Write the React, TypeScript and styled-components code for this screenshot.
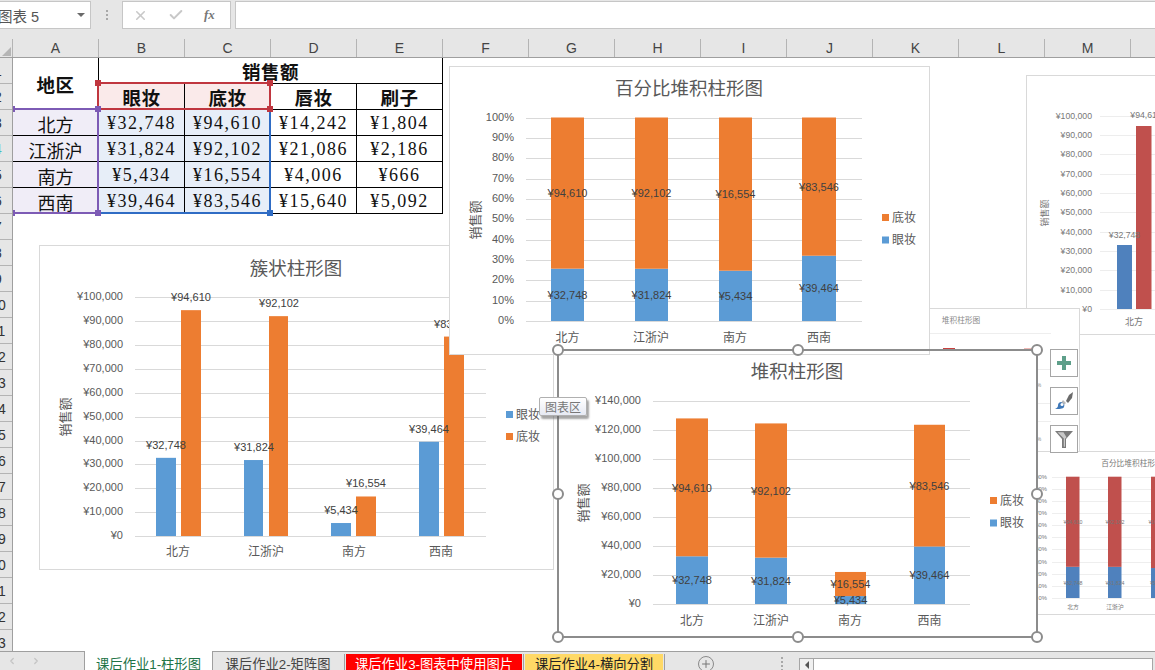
import React from "react";
import styled, { createGlobalStyle } from "styled-components";
import { X, Check, Plus, ChevronLeft, ChevronRight } from "lucide-react";

const FONT = `"Liberation Sans", "Noto Sans CJK SC", sans-serif`;
const BLUE = "#5b9bd5";
const ORANGE = "#ed7d31";
const OLD_BLUE = "#4f81bd";
const OLD_RED = "#c0504d";

const Global = createGlobalStyle`
  html, body { margin: 0; padding: 0; background: #fff; overflow: hidden; }
  * { box-sizing: border-box; }
`;

const Page = styled.div`
  position: relative;
  width: 1155px;
  height: 670px;
  overflow: hidden;
  display: flex;
  flex-direction: column;
  font-family: ${FONT};
  background: #fff;
`;

/* ---------- formula bar ---------- */
const TopBar = styled.div`
  height: 39px;
  flex: none;
  background: #e6e6e6;
  padding-top: 1px;
  display: flex;
  align-items: flex-start;
`;
const NameBox = styled.div`
  width: 91px;
  height: 28px;
  background: #fff;
  border: 1px solid #c6c6c6;
  border-left: none;
  display: flex;
  align-items: center;
  justify-content: space-between;
  padding-right: 5px;
  overflow: hidden;
  font-size: 14.5px;
  color: #555;
`;
const NameText = styled.span`
  margin-left: -2px;
  white-space: nowrap;
`;
const DownArrow = styled.span`
  width: 0;
  height: 0;
  border-left: 4px solid transparent;
  border-right: 4px solid transparent;
  border-top: 4px solid #6a6a6a;
`;
const Grip = styled.div`
  width: 31px;
  height: 28px;
  display: flex;
  flex-direction: column;
  align-items: center;
  justify-content: center;
  gap: 2px;
`;
const GripDot = styled.span`
  width: 2px;
  height: 2px;
  background: #a8a8a8;
`;
const FormulaButtons = styled.div`
  width: 109px;
  height: 28px;
  background: #fff;
  border: 1px solid #c6c6c6;
  display: flex;
  align-items: center;
  gap: 20px;
  padding-left: 10px;
  color: #c8c8c8;
`;
const Fx = styled.i`
  font-family: "Liberation Serif", serif;
  font-size: 13px;
  font-weight: bold;
  color: #777;
`;
const FormulaInput = styled.div`
  flex: 1;
  height: 28px;
  margin-left: 4px;
  background: #fff;
  border: 1px solid #c6c6c6;
  border-right: none;
`;

/* ---------- column headers ---------- */
const ColumnBar = styled.div`
  height: 19px;
  flex: none;
  display: flex;
  background: #e6e6e6;
  border-bottom: 1px solid #9f9f9f;
`;
const Corner = styled.div`
  width: 13px;
  flex: none;
  border-right: 1px solid #b4b4b4;
  position: relative;
  overflow: hidden;
`;
const CornerTriangle = styled.span`
  position: absolute;
  right: 1px;
  bottom: 1px;
  width: 0;
  height: 0;
  border-left: 9px solid transparent;
  border-bottom: 9px solid #b5b5b5;
`;
const ColumnCell = styled.div`
  width: 86px;
  flex: none;
  border-right: 1px solid #b4b4b4;
  display: flex;
  align-items: center;
  justify-content: center;
  font-size: 14px;
  color: #444;
`;

/* ---------- sheet ---------- */
const SheetBody = styled.div`
  flex: 1;
  min-height: 0;
  display: flex;
`;
const RowHeader = styled.div`
  width: 13px;
  flex: none;
  background: #e6e6e6;
  border-right: 1px solid #9f9f9f;
  overflow: hidden;
`;
const RowCell = styled.div`
  height: 26px;
  border-bottom: 1px solid #b4b4b4;
  display: flex;
  align-items: center;
  overflow: hidden;
`;
const RowNumber = styled.span<{ $tint?: boolean }>`
  flex: none;
  width: 56px;
  margin-left: -30px;
  text-align: center;
  font-size: 14px;
  color: ${(p) => (p.$tint ? "#45bcbc" : "#333")};
`;
const TableWrap = styled.div`
  position: relative;
  width: 434px;
  height: 160px;
  overflow: hidden;
  display: grid;
  grid-template-columns: repeat(5, 86px);
  grid-auto-rows: 26px;
  align-content: start;
`;
const Cell = styled.div<{ $bg?: string; $bold?: boolean; $num?: boolean; $col?: string; $row?: string }>`
  grid-column: ${(p) => p.$col ?? "auto"};
  grid-row: ${(p) => p.$row ?? "auto"};
  background: ${(p) => p.$bg ?? "#fff"};
  border-right: 1px solid #000;
  border-bottom: 1px solid #000;
  padding-top: ${(p) => (p.$bold ? "0" : "2px")};
  display: flex;
  align-items: center;
  justify-content: center;
  color: #111;
  font-family: "Liberation Serif", "Noto Sans CJK SC", serif;
  font-size: ${(p) => (p.$bold ? "18.5px" : "18px")};
  font-weight: ${(p) => (p.$bold ? 700 : 400)};
  letter-spacing: ${(p) => (p.$bold ? "0.5px" : p.$num ? "1.5px" : "0")};
  white-space: nowrap;
`;
const RangeBox = styled.div<{ $x: number; $y: number; $w: number; $h: number; $c: string; $open?: boolean }>`
  position: absolute;
  left: ${(p) => p.$x}px;
  top: ${(p) => p.$y}px;
  width: ${(p) => p.$w}px;
  height: ${(p) => p.$h}px;
  border: 2px solid ${(p) => p.$c};
  ${(p) => (p.$open ? "border-left: none;" : "")}
`;
const RangeHandle = styled.span<{ $h: number; $v: number; $c: string }>`
  position: absolute;
  left: calc(${(p) => p.$h}% + ${(p) => (p.$h / 100) * 2 - 1}px);
  top: calc(${(p) => p.$v}% + ${(p) => (p.$v / 100) * 2 - 1}px);
  width: 6px;
  height: 6px;
  background: ${(p) => p.$c};
  transform: translate(-50%, -50%);
`;

/* ---------- charts on the free canvas ---------- */
const ChartLayer = styled.div`
  position: absolute;
  left: 0;
  top: 0;
  width: 1155px;
  height: 651px;
  overflow: hidden;
  pointer-events: none;
`;
const ChartFrame = styled.div<{ $x: number; $y: number; $w: number; $h: number }>`
  position: absolute;
  left: ${(p) => p.$x}px;
  top: ${(p) => p.$y}px;
  width: ${(p) => p.$w}px;
  height: ${(p) => p.$h}px;
  background: #fff;
  border: 1px solid #d9d9d9;
`;
const ChartSvg = styled.svg`
  position: absolute;
  left: -1px;
  top: -1px;
  display: block;
  font-family: ${FONT};
`;
const SelectionBox = styled.div`
  position: absolute;
  left: 557px;
  top: 349px;
  width: 481px;
  height: 289px;
  border: 2px solid #8c8c8c;
`;
const Handle = styled.span<{ $h: number; $v: number }>`
  position: absolute;
  left: calc(${(p) => p.$h}% + ${(p) => (p.$h / 100) * 2 - 1}px);
  top: calc(${(p) => p.$v}% + ${(p) => (p.$v / 100) * 2 - 1}px);
  width: 12px;
  height: 12px;
  border-radius: 50%;
  background: #fff;
  border: 2px solid #8c8c8c;
  transform: translate(-50%, -50%);
`;
const SideButtons = styled.div`
  position: absolute;
  left: 1050px;
  top: 349px;
  display: flex;
  flex-direction: column;
  gap: 10px;
`;
const SideButton = styled.div`
  width: 28px;
  height: 28px;
  background: #fff;
  border: 1px solid #a6a6a6;
  display: flex;
  align-items: center;
  justify-content: center;
`;
const Tooltip = styled.div`
  position: absolute;
  left: 539px;
  top: 397px;
  width: 48px;
  height: 19px;
  border: 1px solid #b0b0b0;
  border-radius: 2px;
  background: linear-gradient(180deg, #fff 0%, #e6e9f3 100%);
  box-shadow: 2px 3px 2px rgba(90, 90, 90, 0.55);
  font-size: 12px;
  color: #777;
  display: flex;
  align-items: center;
  justify-content: center;
`;

/* ---------- sheet tabs ---------- */
const TabBar = styled.div`
  height: 19px;
  flex: none;
  background: #e6e6e6;
  border-top: 1px solid #9f9f9f;
  display: flex;
  position: relative;
  z-index: 2;
`;
const TabNav = styled.div`
  width: 84px;
  flex: none;
  display: flex;
  align-items: center;
  gap: 14px;
  padding-left: 7px;
  color: #c4c4c4;
`;
const Tab = styled.div<{ $w: number; $bg?: string; $fg?: string; $active?: boolean; $gap?: number }>`
  width: ${(p) => p.$w}px;
  flex: none;
  margin-left: ${(p) => p.$gap ?? 0}px;
  margin-top: ${(p) => (p.$active ? "-1px" : p.$bg ? "2px" : "0")};
  margin-bottom: -2px;
  background: ${(p) => (p.$active ? "#fff" : p.$bg ?? "transparent")};
  color: ${(p) => (p.$active ? "#217346" : p.$fg ?? "#444")};
  border-left: ${(p) => (p.$active ? "1px solid #9f9f9f" : "none")};
  border-right: ${(p) => (p.$active ? "1px solid #9f9f9f" : "none")};
  display: flex;
  align-items: flex-end;
  justify-content: center;
  font-size: 13.3px;
  line-height: 15px;
  white-space: nowrap;
  overflow: hidden;
`;
const TabSeparator = styled.span`
  width: 1px;
  flex: none;
  margin: 2px 0 0 1px;
  background: #9f9f9f;
`;
const AddSheet = styled.div`
  width: 16px;
  height: 16px;
  flex: none;
  margin: 4px 0 0 33px;
  border: 1.5px solid #8a8a8a;
  border-radius: 50%;
  display: flex;
  align-items: center;
  justify-content: center;
  color: #777;
`;
const BarGrip = styled.div`
  width: 2px;
  flex: none;
  margin: 5px 0 0 67px;
  height: 13px;
  background: repeating-linear-gradient(180deg, #a8a8a8 0 2px, transparent 2px 4px);
`;
const ScrollTrack = styled.div`
  width: 354px;
  height: 13px;
  flex: none;
  margin: 6px 0 0 16px;
  background: #fff;
  border: 1px solid #a6a6a6;
  border-bottom: none;
  display: flex;
`;
const ScrollButton = styled.div`
  width: 14px;
  flex: none;
  border-right: 1px solid #a6a6a6;
  background: #f0f0f0;
  display: flex;
  align-items: center;
  justify-content: center;
`;
const ScrollArrow = styled.span`
  width: 0;
  height: 0;
  border-top: 4px solid transparent;
  border-bottom: 4px solid transparent;
  border-right: 4px solid #555;
`;

/* ---------- chart data ---------- */
type Rect = { x: number; w: number; y0: number; y1: number; c: string };
type Label = { x: number; y: number; t: string };
type Spec = {
  x: number; y: number; w: number; h: number;
  title?: { x: number; y: number; t: string; s: number };
  axisTitle?: { x: number; y: number; s: number };
  ticks?: { x: number; s: number; labels: string[]; dy: number };
  plot: { x0: number; x1: number; ys: number[]; c: string };
  cats?: { xs: number[]; y: number; s: number; labels?: string[] };
  bars: Rect[];
  labels: Label[];
  labelSize: number;
  legend?: { x: number; items: { y: number; t: string; c: string }[] };
  tone?: string;
};

const CATS = ["北方", "江浙沪", "南方", "西南"];
const EYE = [32748, 31824, 5434, 39464];
const BASE = [94610, 92102, 16554, 83546];
const money = (n: number) => "¥" + n.toLocaleString("en-US");
const range = (top: number, bottom: number, n: number) =>
  Array.from({ length: n + 1 }, (_, i) => top + ((bottom - top) * i) / n);
const moneyTicks = (max: number, step: number) => {
  const out: string[] = [];
  for (let v = max; v >= 0; v -= step) out.push(money(v));
  return out;
};
const pctTicks = Array.from({ length: 11 }, (_, i) => `${100 - i * 10}%`);

const clusterSpec: Spec = (() => {
  const bottom = 536;
  const k = 238.7 / 100000;
  const bx = [[156, 20], [244, 19], [331, 20], [419, 20]];
  const ox = [[181, 20], [269, 19], [356, 20], [444, 20]];
  const bars: Rect[] = [];
  const labels: Label[] = [];
  CATS.forEach((_, i) => {
    const ty = bottom - EYE[i] * k;
    const oy = bottom - BASE[i] * k;
    bars.push({ x: bx[i][0], w: bx[i][1], y0: ty, y1: bottom, c: BLUE });
    bars.push({ x: ox[i][0], w: ox[i][1], y0: oy, y1: bottom, c: ORANGE });
    labels.push({ x: bx[i][0] + 10, y: ty - 13, t: money(EYE[i]) });
    labels.push({ x: ox[i][0] + 10, y: oy - 13, t: money(BASE[i]) });
  });
  return {
    x: 39, y: 245, w: 515, h: 325,
    title: { x: 296, y: 268, t: "簇状柱形图", s: 18.5 },
    axisTitle: { x: 65, y: 417, s: 13 },
    ticks: { x: 123, s: 11, labels: moneyTicks(100000, 10000), dy: -1 },
    plot: { x0: 135, x1: 486, ys: range(297.3, 536, 10), c: "#d9d9d9" },
    cats: { xs: [178, 266, 354, 441], y: 552, s: 12 },
    bars, labels, labelSize: 11,
    legend: { x: 506, items: [{ y: 414.5, t: "眼妆", c: BLUE }, { y: 436.5, t: "底妆", c: ORANGE }] },
  };
})();

const percentSpec: Spec = (() => {
  const top = 117.5, bottom = 321;
  const bx = [[551, 33], [635, 33], [719, 33], [802, 34]];
  const bars: Rect[] = [];
  const labels: Label[] = [];
  const ly = [[295, 193], [295, 193], [296, 194], [288, 187]];
  CATS.forEach((_, i) => {
    const share = EYE[i] / (EYE[i] + BASE[i]);
    const m = bottom - share * (bottom - top);
    bars.push({ x: bx[i][0], w: bx[i][1], y0: m, y1: bottom, c: BLUE });
    bars.push({ x: bx[i][0], w: bx[i][1], y0: top, y1: m, c: ORANGE });
    const cx = bx[i][0] + bx[i][1] / 2;
    labels.push({ x: cx, y: ly[i][0], t: money(EYE[i]) });
    labels.push({ x: cx, y: ly[i][1], t: money(BASE[i]) });
  });
  return {
    x: 449, y: 66, w: 481, h: 289,
    title: { x: 689, y: 88, t: "百分比堆积柱形图", s: 18.5 },
    axisTitle: { x: 475, y: 220, s: 13 },
    ticks: { x: 514, s: 11, labels: pctTicks, dy: -1 },
    plot: { x0: 526, x1: 862, ys: range(top, bottom, 10), c: "#d9d9d9" },
    cats: { xs: [567.5, 651, 735, 819], y: 337.5, s: 12 },
    bars, labels, labelSize: 11,
    legend: { x: 882, items: [{ y: 217.5, t: "底妆", c: ORANGE }, { y: 240, t: "眼妆", c: BLUE }] },
  };
})();

const stackedSpec: Spec = (() => {
  const bottom = 604;
  const k = 204 / 140000;
  const bx = [[676, 32], [755, 32], [835, 31], [914, 31]];
  const ly = [[580, 488], [581, 491], [600, 584], [575, 486]];
  const bars: Rect[] = [];
  const labels: Label[] = [];
  CATS.forEach((_, i) => {
    const m = bottom - EYE[i] * k;
    const t = m - BASE[i] * k;
    bars.push({ x: bx[i][0], w: bx[i][1], y0: m, y1: bottom, c: BLUE });
    bars.push({ x: bx[i][0], w: bx[i][1], y0: t, y1: m, c: ORANGE });
    const cx = bx[i][0] + bx[i][1] / 2;
    labels.push({ x: cx, y: ly[i][0], t: money(EYE[i]) });
    labels.push({ x: cx, y: ly[i][1], t: money(BASE[i]) });
  });
  return {
    x: 558, y: 350, w: 480, h: 288,
    title: { x: 797, y: 371, t: "堆积柱形图", s: 18.5 },
    axisTitle: { x: 583, y: 503, s: 13 },
    ticks: { x: 641, s: 11, labels: moneyTicks(140000, 20000), dy: -1 },
    plot: { x0: 653, x1: 970, ys: range(400.5, 604, 7), c: "#d9d9d9" },
    cats: { xs: [692, 771, 850, 929.5], y: 620.5, s: 12 },
    bars, labels, labelSize: 11,
    legend: { x: 990, items: [{ y: 500.5, t: "底妆", c: ORANGE }, { y: 523, t: "眼妆", c: BLUE }] },
  };
})();

const smallClusterSpec: Spec = {
  x: 1026, y: 75, w: 200, h: 260,
  axisTitle: { x: 1045, y: 213, s: 9 },
  ticks: { x: 1092, s: 8.7, labels: moneyTicks(100000, 10000), dy: 0 },
  plot: { x0: 1100, x1: 1155, ys: range(115.5, 309, 10), c: "#ededed" },
  cats: { xs: [1134], y: 322, s: 9, labels: ["北方"] },
  bars: [
    { x: 1117, w: 15, y0: 245, y1: 309, c: OLD_BLUE },
    { x: 1136, w: 15.5, y0: 126, y1: 309, c: OLD_RED },
  ],
  labels: [
    { x: 1124.5, y: 235, t: "¥32,748" },
    { x: 1146, y: 115, t: "¥94,610" },
  ],
  labelSize: 8.7,
  tone: "#777",
};

const smallStackedSpec: Spec = {
  x: 700, y: 308, w: 380, h: 144,
  title: { x: 961, y: 320, t: "堆积柱形图", s: 7.7 },
  plot: { x0: 780, x1: 1051, ys: [333, 369, 403, 421], c: "#eeeeee" },
  bars: [
    { x: 943, w: 12, y0: 348, y1: 440, c: "#c9403f" },
    { x: 1024, w: 9, y0: 348, y1: 440, c: "#f0b9b6" },
  ],
  labels: [
    { x: 1039, y: 385, t: "%" },
    { x: 1039, y: 439, t: "%" },
  ],
  labelSize: 5,
  tone: "#888",
};

const smallPercentSpec: Spec = (() => {
  const top = 476.7, bottom = 598;
  const bx = [1066, 1108, 1151];
  const bars: Rect[] = [];
  const labels: Label[] = [];
  bx.forEach((x, i) => {
    const share = EYE[i] / (EYE[i] + BASE[i]);
    const m = bottom - share * (bottom - top);
    bars.push({ x, w: 13.5, y0: m, y1: bottom, c: OLD_BLUE });
    bars.push({ x, w: 13.5, y0: top, y1: m, c: OLD_RED });
    labels.push({ x: x + 7, y: 583, t: money(EYE[i]) });
    labels.push({ x: x + 7, y: 522, t: money(BASE[i]) });
  });
  return {
    x: 800, y: 451, w: 420, h: 164,
    title: { x: 1132, y: 463, t: "百分比堆积柱形图", s: 7.7 },
    ticks: { x: 1047, s: 5.8, labels: pctTicks, dy: 0 },
    plot: { x0: 1052, x1: 1155, ys: range(top, bottom, 10), c: "#eeeeee" },
    cats: { xs: [1073, 1115], y: 606.5, s: 5.8, labels: ["北方", "江浙沪"] },
    bars, labels, labelSize: 5.3,
    tone: "#777",
  };
})();

const Chart: React.FC<{ spec: Spec }> = ({ spec }) => {
  const tone = spec.tone ?? "#595959";
  return (
    <ChartFrame $x={spec.x} $y={spec.y} $w={spec.w} $h={spec.h}>
      <ChartSvg width={spec.w} height={spec.h} viewBox={`${spec.x} ${spec.y} ${spec.w} ${spec.h}`}>
        {spec.plot.ys.map((y) => (
          <line
            key={y}
            x1={spec.plot.x0}
            x2={spec.plot.x1}
            y1={Math.round(y) + 0.5}
            y2={Math.round(y) + 0.5}
            stroke={spec.plot.c}
            shapeRendering="crispEdges"
          />
        ))}
        {spec.bars.map((b, i) => (
          <rect key={i} x={b.x} width={b.w} y={b.y0} height={b.y1 - b.y0} fill={b.c} />
        ))}
        {spec.title && (
          <text x={spec.title.x} y={spec.title.y} fontSize={spec.title.s} fill={tone} textAnchor="middle" dominantBaseline="central">
            {spec.title.t}
          </text>
        )}
        {spec.axisTitle && (
          <text
            x={spec.axisTitle.x}
            y={spec.axisTitle.y}
            fontSize={spec.axisTitle.s}
            fill={tone}
            textAnchor="middle"
            dominantBaseline="central"
            transform={`rotate(-90 ${spec.axisTitle.x} ${spec.axisTitle.y})`}
          >
            销售额
          </text>
        )}
        {spec.ticks &&
          spec.ticks.labels.map((t, i) => (
            <text
              key={t}
              x={spec.ticks!.x}
              y={spec.plot.ys[i] + spec.ticks!.dy}
              fontSize={spec.ticks!.s}
              fill={tone}
              textAnchor="end"
              dominantBaseline="central"
            >
              {t}
            </text>
          ))}
        {spec.cats &&
          spec.cats.xs.map((x, i) => (
            <text key={x} x={x} y={spec.cats!.y} fontSize={spec.cats!.s} fill={tone} textAnchor="middle" dominantBaseline="central">
              {(spec.cats!.labels ?? CATS)[i]}
            </text>
          ))}
        {spec.labels.map((l) => (
          <text key={l.t + l.y} x={l.x} y={l.y} fontSize={spec.labelSize} fill={spec.tone ?? "#404040"} textAnchor="middle" dominantBaseline="central">
            {l.t}
          </text>
        ))}
        {spec.legend &&
          spec.legend.items.map((it) => (
            <g key={it.t}>
              <rect x={spec.legend!.x} y={it.y - 3.5} width={7} height={7} fill={it.c} />
              <text x={spec.legend!.x + 10} y={it.y} fontSize={12} fill={tone} dominantBaseline="central">
                {it.t}
              </text>
            </g>
          ))}
      </ChartSvg>
    </ChartFrame>
  );
};

const COLUMNS = "ABCDEFGHIJKLMN".split("");
const ROWS = Array.from({ length: 23 }, (_, i) => i + 1);
const PURPLE = "#f0edf7";
const PALE_BLUE = "#e7eef8";
const PINK = "#faeaea";
const TABLE: string[][] = [
  ["北方", "¥32,748", "¥94,610", "¥14,242", "¥1,804"],
  ["江浙沪", "¥31,824", "¥92,102", "¥21,086", "¥2,186"],
  ["南方", "¥5,434", "¥16,554", "¥4,006", "¥666"],
  ["西南", "¥39,464", "¥83,546", "¥15,640", "¥5,092"],
];
const HANDLES: [number, number][] = [
  [0, 0], [50, 0], [100, 0], [0, 50], [100, 50], [0, 100], [50, 100], [100, 100],
];

export default function App() {
  return (
    <Page>
      <Global />
      <TopBar>
        <NameBox>
          <NameText>图表 5</NameText>
          <DownArrow />
        </NameBox>
        <Grip>
          <GripDot />
          <GripDot />
          <GripDot />
        </Grip>
        <FormulaButtons>
          <X size={15} strokeWidth={2.5} />
          <Check size={16} strokeWidth={3} />
          <Fx>fx</Fx>
        </FormulaButtons>
        <FormulaInput />
      </TopBar>
      <ColumnBar>
        <Corner>
          <CornerTriangle />
        </Corner>
        {COLUMNS.map((c) => (
          <ColumnCell key={c}>{c}</ColumnCell>
        ))}
      </ColumnBar>
      <SheetBody>
        <RowHeader>
          {ROWS.map((r) => (
            <RowCell key={r}>
              <RowNumber $tint={r === 4}>{r}</RowNumber>
            </RowCell>
          ))}
        </RowHeader>
        <TableWrap>
          <Cell $bold $col="1" $row="1 / span 2">地区</Cell>
          <Cell $bold $col="2 / span 4" $row="1">销售额</Cell>
          <Cell $bold $col="2" $row="2" $bg={PINK}>眼妆</Cell>
          <Cell $bold $col="3" $row="2" $bg={PINK}>底妆</Cell>
          <Cell $bold $col="4" $row="2">唇妆</Cell>
          <Cell $bold $col="5" $row="2">刷子</Cell>
          {TABLE.map((row) =>
            row.map((value, i) => (
              <Cell key={value} $num={i > 0} $bg={i === 0 ? PURPLE : i < 3 ? PALE_BLUE : undefined}>
                {value}
              </Cell>
            ))
          )}
          <RangeBox $x={84} $y={50} $w={174} $h={106} $c="#2f6cc4">
            <RangeHandle $h={100} $v={100} $c="#2f6cc4" />
          </RangeBox>
          <RangeBox $x={84} $y={24} $w={174} $h={28} $c="#c0363f">
            <RangeHandle $h={0} $v={0} $c="#c0363f" />
            <RangeHandle $h={100} $v={0} $c="#c0363f" />
            <RangeHandle $h={100} $v={100} $c="#c0363f" />
          </RangeBox>
          <RangeBox $x={0} $y={50} $w={86} $h={106} $c="#7d5bb5" $open>
            <RangeHandle $h={0} $v={0} $c="#7d5bb5" />
            <RangeHandle $h={100} $v={0} $c="#7d5bb5" />
            <RangeHandle $h={0} $v={100} $c="#7d5bb5" />
            <RangeHandle $h={100} $v={100} $c="#7d5bb5" />
          </RangeBox>
        </TableWrap>
      </SheetBody>
      <ChartLayer>
        <Chart spec={smallClusterSpec} />
        <Chart spec={smallStackedSpec} />
        <Chart spec={smallPercentSpec} />
        <Chart spec={clusterSpec} />
        <Chart spec={stackedSpec} />
        <Chart spec={percentSpec} />
        <SelectionBox>
          {HANDLES.map(([h, v]) => (
            <Handle key={`${h}-${v}`} $h={h} $v={v} />
          ))}
        </SelectionBox>
        <SideButtons>
          <SideButton>
            <svg width="16" height="16" viewBox="0 0 16 16">
              <path d="M6 1h4v5h5v4h-5v5H6v-5H1V6h5z" fill="#5e9f8a" />
            </svg>
          </SideButton>
          <SideButton>
            <svg width="20" height="20" viewBox="0 0 20 20">
              <path d="M19 1l-1 6-4 5-2-2 3-6z" fill="#6b6b6b" />
              <path d="M9 9l3 3-2 2-3-2z" fill="#b9b9b9" />
              <path d="M7 11c3 1 4 3 3 5-1 2-5 2-9 2 3-1 3-3 3-4 0-2 2-3 3-3z" fill="#3f78b8" />
              <circle cx="8" cy="13.500" r="1.5" fill="#fff" />
            </svg>
          </SideButton>
          <SideButton>
            <svg width="20" height="20" viewBox="0 0 20 20">
              <path d="M1 2h18l-7 8v9H8v-9z" fill="#7a7a7a" />
              <path d="M3.500 3.300h6l3 5-1.500 1.500v8h-1.200V9.500z" fill="#c8c8c8" />
            </svg>
          </SideButton>
        </SideButtons>
        <Tooltip>图表区</Tooltip>
      </ChartLayer>
      <TabBar>
        <TabNav>
          <ChevronLeft size={10} strokeWidth={3} />
          <ChevronRight size={10} strokeWidth={3} />
        </TabNav>
        <Tab $w={129} $active>课后作业1-柱形图</Tab>
        <Tab $w={130}>课后作业2-矩阵图</Tab>
        <TabSeparator />
        <Tab $w={176} $gap={1} $bg="#ff0000" $fg="#fff">课后作业3-图表中使用图片</Tab>
        <TabSeparator />
        <Tab $w={138} $gap={1} $bg="#ffd966" $fg="#222">课后作业4-横向分割</Tab>
        <TabSeparator />
        <AddSheet>
          <Plus size={12} strokeWidth={2} />
        </AddSheet>
        <BarGrip />
        <ScrollTrack>
          <ScrollButton>
            <ScrollArrow />
          </ScrollButton>
        </ScrollTrack>
      </TabBar>
    </Page>
  );
}
